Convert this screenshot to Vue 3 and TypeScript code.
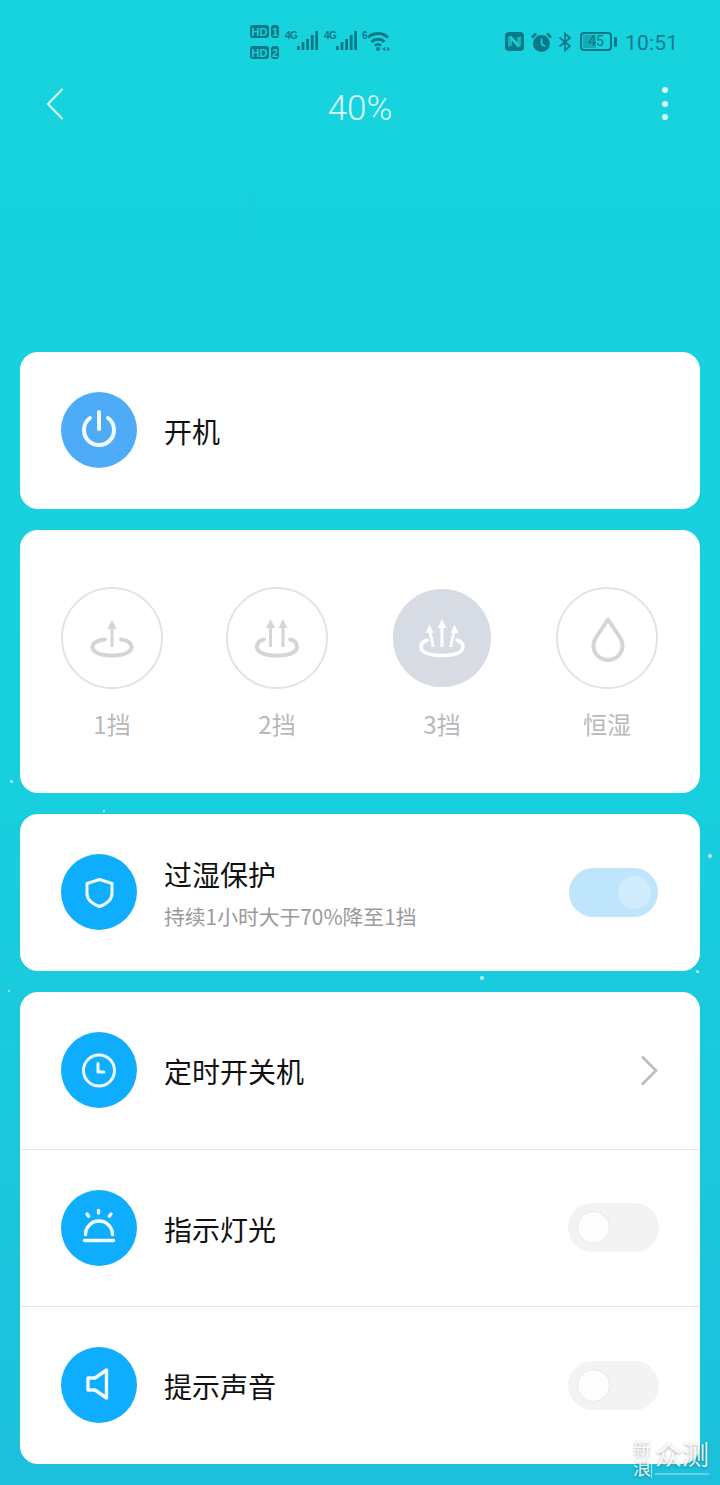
<script setup lang="ts">
interface Level {
  label: string
  active: boolean
}

const levels: Level[] = [
  { label: '1挡', active: false },
  { label: '2挡', active: false },
  { label: '3挡', active: true },
  { label: '恒湿', active: false },
]

// the little specks of the animated background
const specks = [
  [10, 780, 3],
  [103, 810, 2],
  [708, 854, 4],
  [480, 976, 4],
  [8, 990, 2],
  [696, 970, 3],
]
</script>

<template>
  <div class="page">
    <i
      v-for="(s, i) in specks"
      :key="i"
      class="speck"
      :style="{ left: s[0] + 'px', top: s[1] + 'px', width: s[2] + 'px', height: s[2] + 'px' }"
    ></i>

    <div class="status-bar">
      <div class="status-left">
        <div class="sims">
          <div class="sim"><span class="hd">HD</span><span class="num">1</span></div>
          <div class="sim"><span class="hd">HD</span><span class="num">2</span></div>
        </div>
        <div v-for="n in 2" :key="n" class="signal">
          <span class="net">4G</span>
          <svg width="21" height="20" viewBox="0 0 21 20" fill="currentColor">
            <rect x="0" y="15" width="2.8" height="4" />
            <rect x="4.6" y="11" width="2.8" height="8" />
            <rect x="9.2" y="8" width="2.8" height="11" />
            <rect x="13.8" y="4" width="2.8" height="15" />
            <rect x="18.2" y="0" width="2.8" height="19" />
          </svg>
        </div>
        <div class="wifi">
          <span class="net six">6</span>
          <svg width="23" height="21" viewBox="0 0 23 21" fill="none" stroke="currentColor" stroke-width="3">
            <path d="M1 6.5C6.5 1.2 15.5 1.2 21 6.5" />
            <path d="M4.5 10.8C8 7.4 14 7.4 17.5 10.8" />
            <path d="M8 14.6C9.8 13 12.2 13 14 14.6" stroke-width="2.4" />
            <circle cx="11" cy="18" r="2" fill="currentColor" stroke="none" />
            <path d="M15.5 18l2.8-2.2v4.4zM23 18l-2.8-2.2v4.4z" fill="currentColor" stroke="none" />
          </svg>
        </div>
      </div>
      <div class="status-right">
        <svg class="nfc" width="19" height="19" viewBox="0 0 19 19">
          <rect width="19" height="19" rx="4" fill="currentColor" />
          <path d="M4 14.5V5.5l2-1 7 8V5M15 4.5v9l-2 1-7-8V14" fill="none" stroke="#16d3df" stroke-width="1.3" />
        </svg>
        <svg class="alarm" width="21" height="21" viewBox="0 0 21 21">
          <circle cx="10.5" cy="11.5" r="8.5" fill="currentColor" />
          <path d="M10.5 6.5V12l3.5 2.5" fill="none" stroke="#16d3df" stroke-width="1.6" />
          <path d="M1 5.5 5 1.5M20 5.5l-4-4" stroke="currentColor" stroke-width="2.6" />
        </svg>
        <svg class="bt" width="14" height="20" viewBox="0 0 14 20" fill="none" stroke="currentColor" stroke-width="1.7">
          <path d="M1.5 5.5 12 14 7 18.5V1.5L12 6 1.5 14.5" />
        </svg>
        <div class="battery">
          <div class="battery-body">
            <span class="battery-fill"></span>
            <span class="battery-num">45</span>
          </div>
          <span class="battery-tip"></span>
        </div>
        <span class="time">10:51</span>
      </div>
    </div>

    <div class="header">
      <svg class="back" width="18" height="32" viewBox="0 0 18 32" fill="none" stroke="currentColor" stroke-width="2">
        <path d="M16.5 1 2 16l14.5 15" />
      </svg>
      <span class="title">40%</span>
      <div class="more"><i></i><i></i><i></i></div>
    </div>

    <div class="cards">
      <div class="card">
        <div class="row">
          <div class="round power">
            <svg width="76" height="76" viewBox="0 0 76 76" fill="none" stroke="currentColor" stroke-width="4" stroke-linecap="round">
              <path d="M29 26A15 15 0 1 0 47 26" />
              <path d="M38 20V37" />
            </svg>
          </div>
          <div class="text"><div class="name">开机</div></div>
        </div>
      </div>

      <div class="card levels">
        <div v-for="(level, i) in levels" :key="level.label" class="level">
          <div class="level-circle" :class="{ active: level.active }">
            <svg width="102" height="102" viewBox="0 0 102 102" fill="none" stroke="currentColor" stroke-linecap="round" stroke-linejoin="round">
              <template v-if="i === 0">
                <path d="M44 52.5C36 53.5 31.5 56 31.5 60C31.5 65.5 40 68.5 51 68.5S70.5 65.5 70.5 60C70.5 56 67 53.5 60 52.5" stroke-width="4" />
                <path d="M51 40V60" stroke-width="3" stroke-linecap="butt" />
                <path d="M51 33l4.5 9h-9z" fill="currentColor" stroke="none" />
              </template>
              <template v-else-if="i === 1">
                <path d="M38 52.5C33.5 53.5 31 56 31 60C31 65.5 39.5 68.5 51 68.5S71 65.5 71 60C71 56 69 53.5 64 52.5" stroke-width="4" />
                <path d="M44.5 39V60M57 39V60" stroke-width="3" stroke-linecap="butt" />
                <path d="M44.5 32l4.5 9h-9zM57 32l4.5 9h-9z" fill="currentColor" stroke="none" />
              </template>
              <template v-else-if="i === 2">
                <path d="M36 53C32 54.5 30 57 30 60C30 65.5 39 68.5 51 68.5S72 65.5 72 60C72 57 70 54.5 66 53" stroke-width="3.6" />
                <path d="M51 38V60" stroke-width="3" stroke-linecap="butt" />
                <path d="M51 32l4.5 9h-9z" fill="currentColor" stroke="none" />
                <path d="M39 44C39 50 42 52 42 60M63 44C63 50 60 52 60 60" stroke-width="2.8" stroke-linecap="butt" />
                <path d="M38.5 37.5l4 8.5h-8zM63.5 37.5l4 8.5h-8z" fill="currentColor" stroke="none" />
              </template>
              <path v-else d="M52 32.5 40 50.5A14.5 14.5 0 1 0 64 50.5Z" stroke-width="4" />
            </svg>
          </div>
          <div class="level-label">{{ level.label }}</div>
        </div>
      </div>

      <div class="card">
        <div class="row">
          <div class="round">
            <svg width="76" height="76" viewBox="0 0 76 76" fill="none" stroke="currentColor" stroke-width="3" stroke-linejoin="round">
              <path d="M38.5 25.5 51 29.5V39.5C51 46 45.5 50 38.5 52.5 31.5 50 26 46 26 39.5V29.5Z" />
            </svg>
          </div>
          <div class="text">
            <div class="name">过湿保护</div>
            <div class="desc">持续1小时大于70%降至1挡</div>
          </div>
          <div class="switch on"><i></i></div>
        </div>
      </div>

      <div class="card">
        <div class="row">
          <div class="round">
            <svg width="76" height="76" viewBox="0 0 76 76" fill="none" stroke="currentColor" stroke-width="3" stroke-linecap="round" stroke-linejoin="round">
              <circle cx="38" cy="38.5" r="15.5" />
              <path d="M37 31.5V40H43" />
            </svg>
          </div>
          <div class="text"><div class="name">定时开关机</div></div>
          <svg class="arrow" width="18" height="31" viewBox="0 0 18 31" fill="none" stroke="currentColor" stroke-width="2.6">
            <path d="M2 1.5 16 15.5 2 29.5" />
          </svg>
        </div>
        <div class="row">
          <div class="round">
            <svg width="76" height="76" viewBox="0 0 76 76" fill="none" stroke="currentColor" stroke-width="3.4" stroke-linecap="round">
              <path d="M24.5 44.5A13.5 13.5 0 0 1 51.5 44.5" />
              <path d="M23.5 50.5H52.5" />
              <path d="M37.5 20.5V23M26 24l1.7 2.2M50 24l-1.7 2.2" />
            </svg>
          </div>
          <div class="text"><div class="name">指示灯光</div></div>
          <div class="switch"><i></i></div>
        </div>
        <div class="row last">
          <div class="round">
            <svg width="76" height="76" viewBox="0 0 76 76" fill="none" stroke="currentColor" stroke-width="3.4" stroke-linejoin="round">
              <path d="M45.5 23 34 31H27V43H34L45.5 51Z" />
            </svg>
          </div>
          <div class="text"><div class="name">提示声音</div></div>
          <div class="switch"><i></i></div>
        </div>
      </div>
    </div>

    <div class="watermark">
      <div class="wm-sina">新浪</div>
      <div class="wm-main">众测</div>
    </div>
  </div>
</template>

<style scoped>
.page {
  position: relative;
  width: 720px;
  height: 1485px;
  overflow: hidden;
  background: linear-gradient(180deg, #16d3de 0%, #17d0de 50%, #1dc0dc 100%);
  font-family: "Noto Sans CJK SC", "Noto Sans", sans-serif;
}

.speck {
  position: absolute;
  border-radius: 50%;
  background: rgba(255, 255, 255, 0.75);
}

.status-bar {
  height: 70px;
  padding: 25px 44px 0 250px;
  box-sizing: border-box;
  display: flex;
  justify-content: space-between;
  color: #0d7987;
}

.status-left {
  display: flex;
  align-items: flex-start;
}

.sims {
  display: flex;
  flex-direction: column;
  gap: 8px;
  margin-right: 6px;
}

.sim {
  display: flex;
  gap: 2px;
  height: 13px;
}

.hd,
.num {
  display: flex;
  align-items: center;
  justify-content: center;
  height: 13px;
  border-radius: 3px;
  background: #0d7987;
  color: #16d3df;
  font-family: "Liberation Sans", sans-serif;
  font-size: 11px;
  font-weight: 700;
}

.hd {
  width: 19px;
}

.num {
  width: 8px;
}

.signal {
  display: flex;
  align-items: flex-start;
  margin: 6px 6px 0 0;
}

.net {
  font-family: "Liberation Sans", sans-serif;
  font-size: 10px;
  font-weight: 700;
  line-height: 10px;
  width: 12px;
  letter-spacing: -0.5px;
}

.wifi {
  display: flex;
  align-items: flex-start;
  margin-top: 6px;
  margin-left: -1px;
}

.six {
  width: 5px;
  font-size: 10px;
}

.status-right {
  display: flex;
  align-items: flex-start;
  padding-top: 7px;
}

.nfc {
  margin-right: 7px;
}

.alarm {
  margin-right: 6px;
}

.bt {
  margin-right: 8px;
}

.battery {
  display: flex;
  align-items: center;
  height: 19px;
  margin-right: 8px;
}

.battery-body {
  position: relative;
  width: 32px;
  height: 19px;
  box-sizing: border-box;
  border: 2px solid #0d7987;
  border-radius: 4px;
}

.battery-fill {
  position: absolute;
  left: 1px;
  top: 1px;
  bottom: 1px;
  width: 13px;
  background: rgba(13, 121, 135, 0.45);
}

.battery-num {
  position: absolute;
  inset: 0;
  text-align: center;
  font-family: Roboto, sans-serif;
  font-size: 14px;
  line-height: 15px;
}

.battery-tip {
  width: 3px;
  height: 10px;
  margin-left: 2px;
  border-radius: 1px;
  background: #0d7987;
}

.time {
  width: 51px;
  white-space: nowrap;
  font-family: Roboto, sans-serif;
  font-size: 21px;
  letter-spacing: 0.2px;
  line-height: 22px;
  color: #127c8b;
}

.header {
  height: 76px;
  margin-bottom: 206px;
  padding: 0 49px;
  display: grid;
  grid-template-columns: 1fr auto 1fr;
  align-items: center;
  color: #dffafb;
}

.back {
  margin: -8px 0 0 -3px;
}

.title {
  font-family: Roboto, sans-serif;
  font-size: 35px;
  font-weight: 300;
}

.more {
  justify-self: end;
  display: flex;
  flex-direction: column;
  gap: 7.5px;
  margin: -9px 3px 0 0;
}

.more i {
  width: 6px;
  height: 6px;
  border-radius: 50%;
  background: #dffafb;
}

.cards {
  display: flex;
  flex-direction: column;
  gap: 21px;
  padding: 0 20px;
}

.card {
  background: #fff;
  border-radius: 18px;
  overflow: hidden;
}

.row {
  height: 157px;
  padding: 0 41px 1px;
  box-sizing: border-box;
  display: flex;
  align-items: center;
}

.row + .row {
  border-top: 1px solid #e3e3e3;
}

.row.last {
  height: 158px;
}

.round {
  width: 76px;
  height: 76px;
  flex: none;
  border-radius: 50%;
  background: #0fadfe;
  color: #f0faff;
}

.round svg {
  display: block;
}

.round.power {
  background: #4dabf7;
}

.text {
  flex: 1;
  margin-left: 27px;
  padding-top: 2px;
}

.name {
  font-size: 28px;
  line-height: 38px;
  color: #111;
}

.desc {
  margin: 9px 0 1px;
  font-size: 20.8px;
  line-height: 28px;
  color: #9a9a9a;
}

.arrow {
  margin-right: 1px;
  color: #bcbcbc;
}

.switch {
  position: relative;
  width: 91px;
  height: 49px;
  border-radius: 25px;
  background: #f3f3f3;
}

.switch i {
  position: absolute;
  left: 9px;
  top: 8px;
  width: 33px;
  height: 33px;
  box-sizing: border-box;
  border: 1px solid #e9e9e9;
  border-radius: 50%;
  background: #fdfdfd;
}

.switch.on {
  width: 89px;
  margin-right: 1px;
  background: #bfe5fc;
}

.switch.on i {
  left: 49px;
  border: none;
  background: #d0ecfd;
}

.levels {
  height: 263px;
  padding: 0 9.5px;
  box-sizing: border-box;
  display: grid;
  grid-template-columns: repeat(4, 165px);
  align-content: start;
}

.level {
  display: flex;
  flex-direction: column;
  align-items: center;
  padding-top: 57px;
}

.level-circle {
  position: relative;
  width: 102px;
  height: 102px;
  box-sizing: border-box;
  border: 2px solid #e2e4e4;
  border-radius: 50%;
  color: #d3d6d6;
}

.level-circle svg {
  position: absolute;
  left: -2px;
  top: -2px;
}

.level-circle.active {
  border: 2px solid #fff;
  background: #d7dbe3;
  color: #fff;
}

.level-label {
  margin-top: 18px;
  font-size: 24px;
  line-height: 34px;
  color: #b6b9bb;
}

.watermark {
  position: absolute;
  left: 632px;
  top: 1440px;
  display: flex;
  align-items: flex-start;
  color: rgba(255, 255, 255, 0.9);
  text-shadow: 0 1px 3px rgba(0, 0, 0, 0.35);
}

.wm-sina {
  writing-mode: vertical-rl;
  white-space: nowrap;
  width: 19px;
  height: 38px;
  margin-right: 3px;
  border-right: 1px solid rgba(255, 255, 255, 0.6);
  font-size: 18px;
  line-height: 19px;
  letter-spacing: 1px;
}

.wm-main {
  width: 54px;
  height: 33px;
  font-size: 27px;
  line-height: 28px;
  white-space: nowrap;
  border-bottom: 2px solid rgba(255, 255, 255, 0.3);
}
</style>
